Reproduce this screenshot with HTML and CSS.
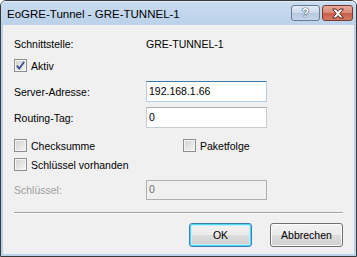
FILE: index.html
```html
<!DOCTYPE html>
<html lang="de">
<head>
<meta charset="utf-8">
<title>EoGRE-Tunnel - GRE-TUNNEL-1</title>
<link rel="stylesheet" href="styles.css">
</head>
<body>
<div class="window">
  <div class="titlebar">
    <span class="title">EoGRE-Tunnel - GRE-TUNNEL-1</span>
    <div class="tbtns">
      <span class="tb help">?</span>
      <span class="tb close"><svg width="14" height="11" viewBox="0 0 14 11"><path d="M1.5 1 H5 L7 3.3 L9 1 H12.5 L8.8 5.5 L12.5 10 H9 L7 7.7 L5 10 H1.5 L5.2 5.5 Z" fill="#fff" stroke="#5a2a22" stroke-width="1" stroke-linejoin="round"/></svg></span>
    </div>
  </div>
  <div class="client">
    <div class="row info"><span class="lbl">Schnittstelle:</span><span class="val">GRE-TUNNEL-1</span></div>
    <div class="chkrow aktiv"><span class="cb"><svg width="9" height="9" viewBox="0 0 9 9"><path d="M0.8 4.6 L3.3 7.6 L8.2 0.8" fill="none" stroke="#3b4f8a" stroke-width="1.8"/></svg></span><span>Aktiv</span></div>
    <div class="row field server"><span class="lbl">Server-Adresse:</span><span class="input focus">192.168.1.66</span></div>
    <div class="row field routing"><span class="lbl">Routing-Tag:</span><span class="input">0</span></div>
    <div class="twocol">
      <div class="chkrow"><span class="cb"></span><span>Checksumme</span></div>
      <div class="chkrow"><span class="cb"></span><span>Paketfolge</span></div>
    </div>
    <div class="chkrow schl"><span class="cb"></span><span>Schlüssel vorhanden</span></div>
    <div class="row field key"><span class="lbl disabled">Schlüssel:</span><span class="input off">0</span></div>
    <div class="sep"></div>
    <div class="buttons">
      <span class="btn default">OK</span>
      <span class="btn">Abbrechen</span>
    </div>
  </div>
</div>
</body>
</html>
```
FILE: styles.css
```css
html, body { margin: 0; padding: 0; background: #fff; }
body { font-family: "Liberation Sans", Arial, sans-serif; font-size: 10.5px; color: #000; }

.window {
  width: 357px; height: 257px; box-sizing: border-box;
  border: 1px solid #3a3a3a; border-radius: 6px 6px 0 0;
  background: #b9d1ea;
  padding: 0 2px 2px 2px;
  display: flex; flex-direction: column;
}
.titlebar {
  height: 24px; flex: none;
  display: flex; align-items: flex-start; justify-content: space-between;
  background: linear-gradient(#c9dcf0, #bbd2ea);
  border-radius: 5px 5px 0 0;
  margin: 0 -2px; padding: 0 3px 0 6px;
  box-shadow: inset 0 1px 0 #e2ecf7;
}
.title { font-size: 11.5px; margin-top: 7px; line-height: 13px; color: #000; }
.tbtns { display: flex; gap: 2px; margin-top: 4px; }
.tb {
  height: 14px; box-sizing: content-box; border: 1px solid #6b7b93; border-radius: 3px;
  display: flex; align-items: center; justify-content: center;
}
.help {
  width: 27px; background: linear-gradient(#e3ecf6 0%, #cbd9ea 50%, #b5c8e0 51%, #c6d6ea 100%);
  font-weight: bold; font-size: 12px; color: #fff;
  text-shadow: 0 0 1px #33475f, 0 0 1px #33475f, 0 0 1px #33475f;
}
.close {
  width: 29px; border-color: #713a33;
  background: linear-gradient(#e9a99d 0%, #d98977 50%, #c85c48 51%, #d77a62 100%);
}

.client {
  flex: 1; background: #f0f0f0;
  padding: 11px 11px 0 11px;
  display: flex; flex-direction: column;
}
.row { display: flex; align-items: center; }
.lbl { width: 132px; flex: none; }
.info { height: 16px; }
.chkrow { display: flex; align-items: center; height: 15px; gap: 4px; }
.aktiv { margin-top: 6px; }
.cb {
  width: 11px; height: 11px; flex: none;
  border: 1px solid #8e8f8f;
  background: linear-gradient(135deg, #cfd0d2, #f6f6f6);
  box-shadow: inset 0 0 0 1px #f4f4f4;
  display: flex; align-items: center; justify-content: center;
}
.field { height: 21px; }
.server { margin-top: 8px; }
.routing { margin-top: 5px; }
.input {
  width: 115px; height: 19px; box-sizing: content-box;
  border: 1px solid #c8ccd2; border-top-color: #abadb3;
  background: #fff; padding: 0 2px;
  display: flex; align-items: center; line-height: 19px;
}
.input.focus { border-color: #b5cfe7; border-top-color: #3d7bad; }
.input.off { background: #f0f0f0; border-color: #afafaf; color: #6d6d6d; height: 18px; }
.disabled { color: #a0a0a0; }
.twocol { display: grid; grid-template-columns: 169px 1fr; margin-top: 10px; }
.schl { margin-top: 4px; }
.key { margin-top: 7px; }
.sep { height: 0; border-top: 1px solid #a0a0a0; border-bottom: 1px solid #fff; margin: 12px 0 0 0; }
.buttons { display: flex; justify-content: flex-end; gap: 18px; margin-top: 9px; padding-right: 0; }
.btn {
  height: 22px; box-sizing: content-box;
  border: 1px solid #707070; border-radius: 3px;
  background: linear-gradient(#f2f2f2 0%, #ebebeb 50%, #dddddd 51%, #cfcfcf 100%);
  display: flex; align-items: center; justify-content: center;
  box-shadow: inset 0 0 0 1px #fcfcfc;
}
.btn:first-child { width: 61px; }
.btn:last-child { width: 71px; }
.btn.default { border-color: #3c7fb1; box-shadow: inset 0 0 0 1px #48d8fb, inset 0 0 0 2px #c4ecfb; }
```
